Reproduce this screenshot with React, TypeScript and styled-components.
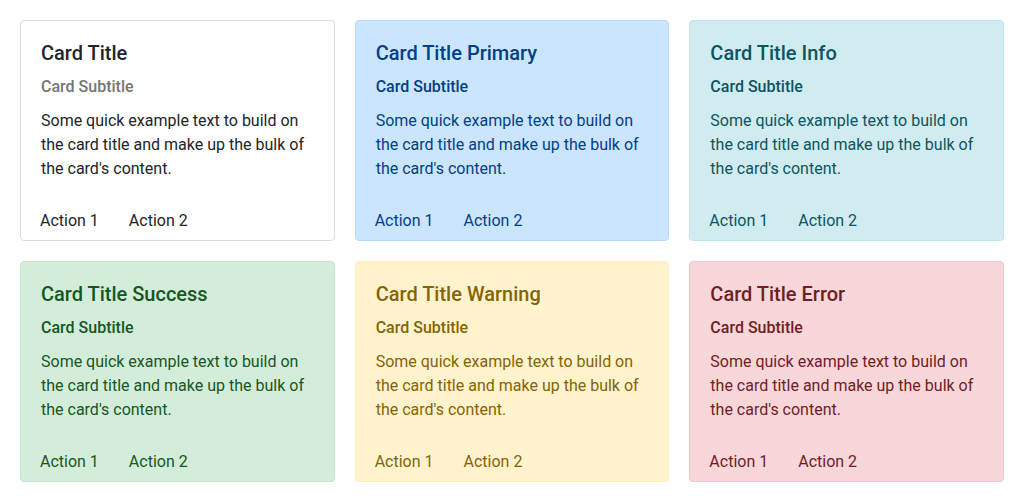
import React from "react";
import styled, { createGlobalStyle } from "styled-components";

const GlobalStyle = createGlobalStyle`
  html, body {
    margin: 0;
    padding: 0;
    background: #ffffff;
    font-family: Roboto, "Liberation Sans", Arial, sans-serif;
  }
  * { box-sizing: border-box; }
`;

type Variant = "default" | "primary" | "info" | "success" | "warning" | "error";

const palette: Record<Variant, { bg: string; border: string; text: string; sub: string }> = {
  default: { bg: "#ffffff", border: "#dcdcdc", text: "#212529", sub: "#757575" },
  primary: { bg: "#cce5ff", border: "#b8daff", text: "#004085", sub: "#004085" },
  info: { bg: "#d1ecf1", border: "#bee5eb", text: "#0c5460", sub: "#0c5460" },
  success: { bg: "#d4edda", border: "#c3e6cb", text: "#155724", sub: "#155724" },
  warning: { bg: "#fff3cd", border: "#ffeeba", text: "#856404", sub: "#856404" },
  error: { bg: "#f8d7da", border: "#f5c6cb", text: "#721c24", sub: "#721c24" },
};

const Page = styled.div`
  padding: 20px;
  display: grid;
  grid-template-columns: repeat(3, 1fr);
  gap: 20px;
`;

const Card = styled.div<{ $v: Variant }>`
  display: flex;
  flex-direction: column;
  background: ${(p) => palette[p.$v].bg};
  border: 1px solid ${(p) => palette[p.$v].border};
  border-radius: 4px;
  color: ${(p) => palette[p.$v].text};
  min-height: 221px;
`;

const Body = styled.div`
  padding: 20px 20px 0 20px;
`;

const Title = styled.h2`
  margin: 0;
  font-size: 20px;
  line-height: 24px;
  font-weight: 500;
`;

const Subtitle = styled.h3<{ $v: Variant }>`
  margin: 12px 0 0 0;
  font-size: 16px;
  line-height: 19px;
  font-weight: 500;
  color: ${(p) => palette[p.$v].sub};
`;

const Text = styled.p`
  margin: 13px 0 0 0;
  font-size: 16px;
  line-height: 24px;
`;

const Actions = styled.div`
  margin-top: auto;
  display: flex;
  gap: 30px;
  padding: 0 19px 7px 19px;
`;

const Action = styled.span`
  font-size: 16px;
  line-height: 24px;
  cursor: pointer;
`;

const cards: { v: Variant; title: string }[] = [
  { v: "default", title: "Card Title" },
  { v: "primary", title: "Card Title Primary" },
  { v: "info", title: "Card Title Info" },
  { v: "success", title: "Card Title Success" },
  { v: "warning", title: "Card Title Warning" },
  { v: "error", title: "Card Title Error" },
];

export default function App() {
  return (
    <>
      <GlobalStyle />
      <Page>
        {cards.map((c) => (
          <Card key={c.v} $v={c.v}>
            <Body>
              <Title>{c.title}</Title>
              <Subtitle $v={c.v}>Card Subtitle</Subtitle>
              <Text>
                Some quick example text to build on the card title and make up the bulk of the card's content.
              </Text>
            </Body>
            <Actions>
              <Action>Action 1</Action>
              <Action>Action 2</Action>
            </Actions>
          </Card>
        ))}
      </Page>
    </>
  );
}
